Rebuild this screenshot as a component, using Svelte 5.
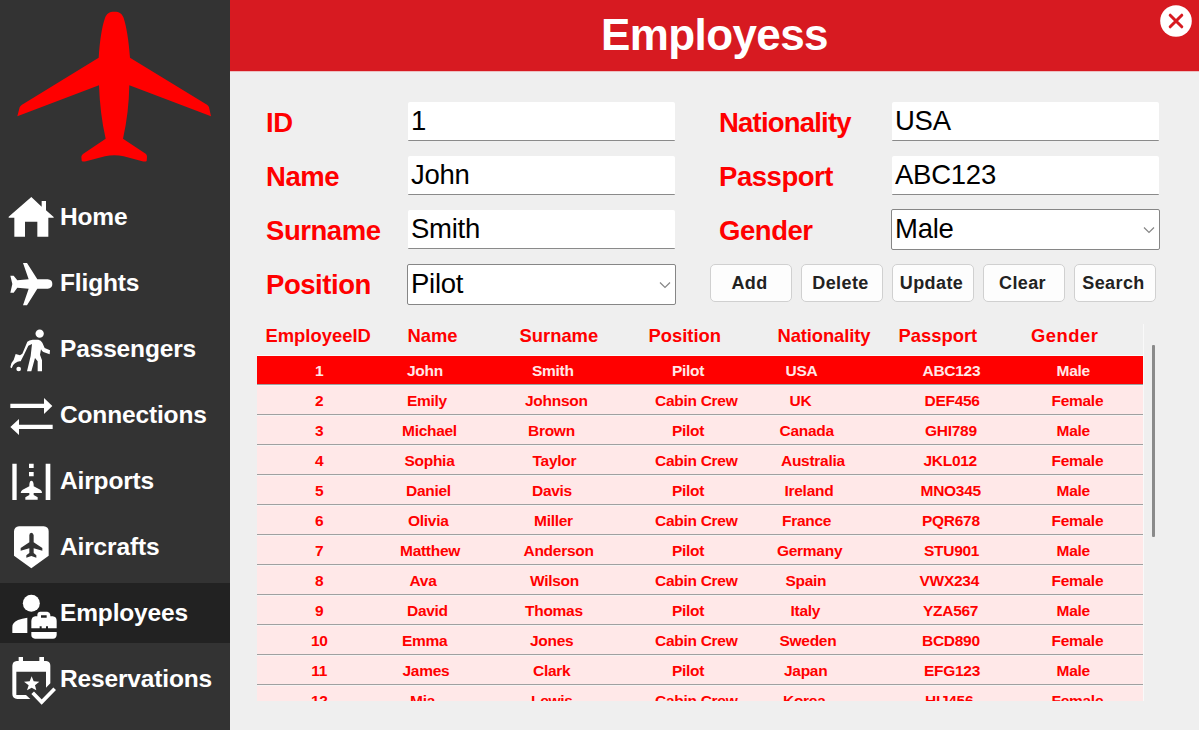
<script>
  const menu = [
    { label: 'Home', icon: 'home', y: 21 },
    { label: 'Flights', icon: 'flights', y: 219 },
    { label: 'Passengers', icon: 'passengers', y: -3 },
    { label: 'Connections', icon: 'connections', y: 195 },
    { label: 'Airports', icon: 'airports', y: 3 },
    { label: 'Aircrafts', icon: 'aircrafts', y: 201 },
    { label: 'Employees', icon: 'employees', y: 24, active: true },
    { label: 'Reservations', icon: 'reservations', y: 222 }
  ];

  const buttons = ['Add', 'Delete', 'Update', 'Clear', 'Search'];
  const headers = ['EmployeeID', 'Name', 'Surname', 'Position', 'Nationality', 'Passport', 'Gender'];

  // Each cell is [text, indent inside its column].
  const people = [
    [['John', 7], ['Smith', 12], 'Pilot', ['USA', 9], ['ABC123', 23], 'Male'],
    [['Emily', 7], ['Johnson', 5], 'Cabin Crew', ['UK', 13], ['DEF456', 25], 'Female'],
    [['Michael', 2], ['Brown', 8], 'Pilot', ['Canada', 3], ['GHI789', 25.5], 'Male'],
    [['Sophia', 4.5], ['Taylor', 12.5], 'Cabin Crew', ['Australia', 4.5], ['JKL012', 24], 'Female'],
    [['Daniel', 6], ['Davis', 12], 'Pilot', ['Ireland', 8], ['MNO345', 21], 'Male'],
    [['Olivia', 8], ['Miller', 14], 'Cabin Crew', ['France', 5.5], ['PQR678', 22.5], 'Female'],
    [['Matthew', 0], ['Anderson', 3.5], 'Pilot', ['Germany', 0.5], ['STU901', 24.5], 'Male'],
    [['Ava', 9.5], ['Wilson', 10], 'Cabin Crew', ['Spain', 9], ['VWX234', 20], 'Female'],
    [['David', 7], ['Thomas', 5], 'Pilot', ['Italy', 14], ['YZA567', 23.5], 'Male'],
    [['Emma', 2], ['Jones', 10], 'Cabin Crew', ['Sweden', 3], ['BCD890', 22.5], 'Female'],
    [['James', 2.5], ['Clark', 13], 'Pilot', ['Japan', 7.5], ['EFG123', 24.5], 'Male'],
    [['Mia', 10], ['Lewis', 11], 'Cabin Crew', ['Korea', 6.5], ['HIJ456', 25.5], 'Female']
  ];
</script>

<div class="app">
  <aside>
    <svg class="logo" viewBox="0 0 690 540">
      <path fill="#f00" d="M343 35C358 35 366 40 371 54C380 82 386 122 390 173L621 314Q626 317 627 322L633 349L388 256C387 310 381 365 369 416L437 461Q441 464 441 470L440 483Q436 486 427 484L371 469Q343 463 315 469L258 484Q248 486 245 482L244 470Q245 465 249 462L317 416C305 365 299 310 297 256L52 349L59 322Q61 317 66 314L296 173C300 122 305 82 315 54C320 40 328 35 343 35Z" />
    </svg>
    <nav>
      {#each menu as item}
        <a class="item" class:active={item.active}>
          <svg viewBox="0 {item.y} 180 180" fill="#fff">
            {#if item.icon === 'home'}
              <path d="M94 51L125 80V63H138V91L161 111V113H145V170H112V125H75V170H43V113H26V110Z" />
            {:else if item.icon === 'flights'}
              <path d="M69 249H81L112 298H143Q157 299 157 312Q157 325 143 326H112L81 376H69L86 326L52 323L41 338H31L37 312L31 287H41L52 301L86 298Z" />
            {:else if item.icon === 'passengers'}
              <circle cx="119" cy="41" r="12.5" />
              <path d="M82 65Q87 60 98 59L115 59Q123 60 127 68L134 84L150 91L149 103L130 96Q126 94 123 88L120 104L126 121V154H113V124L105 114L94 154H81L92 108L96 72L85 77L72 104L62 124Q55 122 45 130Q37 135 35 145L31 142Q33 127 41 120L47 102L60 106L67 101Z" />
              <circle cx="56" cy="147" r="7" />
            {:else if item.icon === 'connections'}
              <path d="M31 251H132V234L157 258L132 282V264H31ZM158 314H57V297L31 321L57 345V327H158Z" />
            {:else if item.icon === 'airports'}
              <path d="M37 41H50V150H37ZM137 41H151V150H137ZM87 41H101V54H87ZM87 66H101V79H87ZM88 104Q89 92 94 92Q100 92 101 104V109L121 119Q126 122 126 129H101V135L113 142V149H76V142L88 135V129H62Q63 122 68 119L88 109Z" />
            {:else if item.icon === 'aircrafts'}
              <path fill-rule="evenodd" d="M57 229H131Q146 230 146 244V317L94 355L42 317V244Q43 230 57 229ZM88 256V277L62 294V302L88 295V309L79 316V323L94 318L109 323V316L101 309V295L127 302V294L101 277V256Q100 248 94 248Q88 248 88 256Z" />
            {:else if item.icon === 'employees'}
              <circle cx="94" cy="85" r="25.5" />
              <path d="M82 128V174H37V157Q36 143 54 135Q66 130 82 128Z" />
              <path fill-rule="evenodd" d="M112 124V119Q113 110 121 110H142Q150 111 151 119V124H158Q170 125 170 138V160H144V154H138V160H125V154H119V160H94V138Q95 125 106 124ZM123 121V128H140V121ZM94 171H170V180Q169 191 159 191H105Q94 190 94 180Z" />
            {:else}
              <path fill-rule="evenodd" d="M56 246H69V258H118V246H132V258H139Q151 260 151 272V325L138 338V290H49V360H78L91 372H52Q37 371 37 357V272Q38 259 50 258H56Z" />
              <path d="M95 304L101 319L118 320L105 331L109 346L95 338L81 346L86 331L72 320L89 319Z" />
              <path d="M98 353L125 381L164 341" fill="none" stroke="#fff" stroke-width="11" />
            {/if}
          </svg>
          <span>{item.label}</span>
        </a>
      {/each}
    </nav>
  </aside>

  <main>
    <header>
      <h1>Employess</h1>
      <svg class="close" viewBox="0 0 32 32">
        <circle cx="16" cy="16" r="15.8" fill="#fff" />
        <path d="M10.2 10.2L21.8 21.8M21.8 10.2L10.2 21.8" stroke="#d71a21" stroke-width="3" stroke-linecap="round" />
      </svg>
    </header>

    <section class="form">
      <div class="fields">
        <div class="field"><label>ID</label><div class="input">1</div></div>
        <div class="field"><label>Name</label><div class="input">John</div></div>
        <div class="field"><label>Surname</label><div class="input">Smith</div></div>
        <div class="field">
          <label>Position</label>
          <div class="input select">Pilot
            <svg viewBox="0 0 12 8"><path d="M1 1.5L6 6.5L11 1.5" fill="none" stroke="#868686" stroke-width="1.2" /></svg>
          </div>
        </div>
      </div>
      <div class="fields right">
        <div class="field"><label class="tight">Nationality</label><div class="input">USA</div></div>
        <div class="field"><label>Passport</label><div class="input">ABC123</div></div>
        <div class="field">
          <label>Gender</label>
          <div class="input select up">Male
            <svg viewBox="0 0 12 8"><path d="M1 1.5L6 6.5L11 1.5" fill="none" stroke="#868686" stroke-width="1.2" /></svg>
          </div>
        </div>
        <div class="buttons">
          {#each buttons as b}<button>{b}</button>{/each}
        </div>
      </div>
    </section>

    <section class="tablewrap">
      <div class="table">
        <div class="head">
          {#each headers as h}<span class:narrow={h === 'Nationality'} class:wide={h === 'Gender'}>{h}</span>{/each}
        </div>
        {#each people as p, i}
          <div class="row" class:selected={i === 0}>
            <span class="num">{i + 1}</span>
            {#each p as cell}
              {#if Array.isArray(cell)}
                <span style="padding-left:{cell[1]}px">{cell[0]}</span>
              {:else}
                <span class={cell === 'Pilot' ? 'pilot' : cell === 'Male' ? 'male' : ''}>{cell}</span>
              {/if}
            {/each}
          </div>
        {/each}
      </div>
      <div class="scroll"></div>
    </section>
  </main>
</div>

<style>
  :global(body) { margin: 0; background: #efefef; }
  .app {
    display: flex;
    width: 1199px;
    height: 730px;
    overflow: hidden;
    background: #efefef;
    font-family: "Liberation Sans", Arial, sans-serif;
  }
  aside { width: 230px; flex: none; background: #333; }
  .logo { display: block; width: 230px; height: 180px; }
  nav { display: flex; flex-direction: column; gap: 6px; padding-top: 7px; }
  .item {
    display: flex;
    height: 60px;
    line-height: 60px;
    color: #fff;
    font-size: 24.5px;
    font-weight: bold;
    letter-spacing: -0.15px;
  }
  .item.active { background: #222; }
  .item svg { width: 60px; height: 60px; flex: none; }

  main { flex: 1; min-width: 0; }
  header {
    position: relative;
    height: 72px;
    background: #d71a21;
    border-bottom: 1px solid #ecbfc1;
    box-sizing: border-box;
    display: flex;
    justify-content: center;
  }
  h1 { margin: 0; color: #fff; font-size: 44px; line-height: 70px; letter-spacing: -0.6px; }
  .close { position: absolute; right: 7px; top: 5px; width: 32px; height: 32px; }

  .form { display: flex; padding: 30px 0 0 36px; height: 220px; box-sizing: border-box; }
  .fields { width: 453px; display: flex; flex-direction: column; }
  .right { width: 480px; }
  .field { display: flex; height: 54px; flex: none; }
  label {
    width: 142px;
    color: #f00;
    font-size: 27.5px;
    font-weight: bold;
    line-height: 41px;
    letter-spacing: -0.45px;
  }
  .right label { width: 173px; }
  label.tight { letter-spacing: -0.8px; }
  .input {
    width: 267px;
    height: 39px;
    box-sizing: border-box;
    padding-left: 3px;
    background: #fff;
    border-bottom: 1px solid #8a8a8a;
    color: #000;
    font-size: 27.5px;
    line-height: 37px;
    letter-spacing: -0.25px;
    border-radius: 2px 2px 1px 1px;
  }
  .select {
    display: flex;
    justify-content: space-between;
    width: 269px;
    height: 41px;
    margin: 0 0 0 -1px;
    border: 1px solid #868686;
    border-radius: 2px;
  }
  .up { margin-top: -1px; }
  .select svg { width: 12px; height: 8px; margin: 16px 4px 0 0; }
  .buttons { display: flex; gap: 9px; margin-left: -9px; }
  button {
    width: 82px;
    height: 38px;
    padding: 0 3px 0 0;
    border: 1px solid #d0d0d0;
    border-radius: 5px;
    background: #fdfdfd;
    color: #222;
    font: bold 18px "Liberation Sans", Arial, sans-serif;
    letter-spacing: 0.4px;
  }

  .tablewrap { display: flex; padding: 32px 0 0 27px; }
  .table {
    width: 886px;
    height: 377px;
    overflow: hidden;
    border-right: 1px solid #f9f9f9;
    color: #f00;
    font-weight: bold;
  }
  .head, .row { display: grid; white-space: nowrap; }
  .head {
    grid-template-columns: 142px 112px 129px 129px 121px 132.5px 1fr;
    height: 31px;
    padding-left: 8.5px;
    border-bottom: 1px solid #fbfbfb;
    font-size: 18.4px;
    line-height: 24px;
  }
  .narrow { letter-spacing: -0.1px; }
  .wide { letter-spacing: 0.5px; }
  .row {
    grid-template-columns: 143px 120px 135px 121.5px 123px 152px 1fr;
    height: 28px;
    border-bottom: 1px solid #a0a0a0;
    box-shadow: 0 1px #f7f3f3;
    margin-bottom: 1px;
    background: #ffe8e8;
    font-size: 15.5px;
    line-height: 30px;
    letter-spacing: -0.28px;
  }
  .num { width: 124.5px; text-align: center; }
  .pilot { padding-left: 17px; }
  .male { padding-left: 5px; }
  .selected { background: #f00; color: #ffe8e8; }
  .scroll { width: 3px; height: 192px; margin: 21px 0 0 8px; background: #8a8a8a; border-radius: 1px; }
</style>
